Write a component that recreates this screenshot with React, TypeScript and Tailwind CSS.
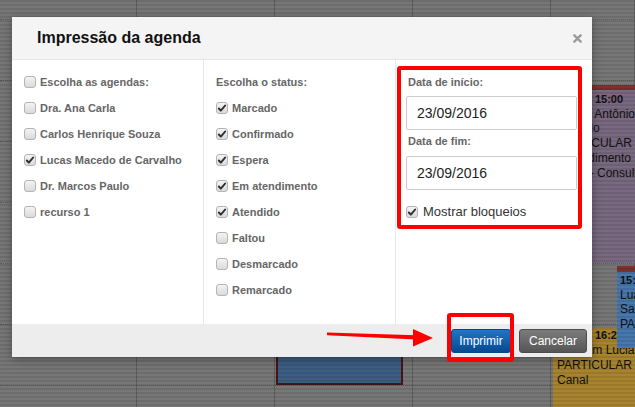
import React from 'react'

const agendas = [
  { label: 'Escolha as agendas:', checked: false },
  { label: 'Dra. Ana Carla', checked: false },
  { label: 'Carlos Henrique Souza', checked: false },
  { label: 'Lucas Macedo de Carvalho', checked: true },
  { label: 'Dr. Marcos Paulo', checked: false },
  { label: 'recurso 1', checked: false },
]

const statuses = [
  { label: 'Marcado', checked: true },
  { label: 'Confirmado', checked: true },
  { label: 'Espera', checked: true },
  { label: 'Em atendimento', checked: true },
  { label: 'Atendido', checked: true },
  { label: 'Faltou', checked: false },
  { label: 'Desmarcado', checked: false },
  { label: 'Remarcado', checked: false },
]

const gridCols = ['w-[137px]', 'w-[138px]', 'w-[138px]', 'w-[138px]', 'w-[84px]']

function Check({ checked = false }: { checked?: boolean }) {
  return (
    <span className="flex h-[12px] w-[12px] shrink-0 items-center justify-center rounded-[3px] border border-[#b3b3b3] bg-linear-to-b from-[#f4f4f4] to-[#dadada]">
      {checked && (
        <svg viewBox="0 0 12 12" className="h-[10px] w-[10px]">
          <path d="M2.2 6.6 L4.6 9.2 L9.8 3" fill="none" stroke="#2e2e2e" strokeWidth="2.3" strokeLinecap="round" strokeLinejoin="round" />
        </svg>
      )}
    </span>
  )
}

function CheckRow({ label, checked }: { label: string, checked: boolean }) {
  return (
    <div className="flex h-[26px] items-center gap-[4px]">
      <Check checked={ checked } />
      <span className="text-[11px] font-bold text-[#666]">{label}</span>
    </div>
  )
}

export default function App() {
  return (
    <div className="relative h-[407px] w-[635px] overflow-hidden bg-[#777777] font-['Liberation_Sans',Arial,sans-serif]">
      {/* grade da agenda ao fundo */}
      <div className="flex h-full">
        {gridCols.map((w, i) => (
          <div key={ i } className={ `${w} h-full border-r border-[#5e5e5e]` }>
            <div className="h-[20px] border-b border-dotted border-[#5a5a5a]" />
            {[0, 1, 2, 3, 4, 5].map(r => (
              <div key={ r } className="h-[61px] border-b border-dotted border-[#5a5a5a]" />
            ))}
          </div>
        ))}
      </div>

      {/* eventos */}
      <div className="absolute left-[276px] top-[300px] h-[85px] w-[127px] border-2 border-[#4d1212] bg-[#3d5e84]" />

      <div className="absolute left-[553px] top-[85px] h-[178px] w-[82px] overflow-hidden bg-[#786880] text-[12px] leading-[14.7px] whitespace-nowrap text-[#111]">
        <div className="h-[5px] bg-[#7e3030]" />
        <div className="px-[4px] pt-[2px]">
          <div className="text-[11px] font-bold">14:20 - 15:00</div>
          <div>Carlos Antônio</div>
          <div>Macedo</div>
          <div>PARTICULAR</div>
          <div>Procedimento</div>
          <div>Geral - Consulta</div>
        </div>
      </div>

      <div className="absolute left-[553px] top-[328px] h-[79px] w-[82px] overflow-hidden bg-[#a8842e] px-[4px] text-[12px] leading-[15px] whitespace-nowrap text-[#111]">
        <div className="text-[11px] font-bold">15:40 - 16:20</div>
        <div>Joaquim Luciano</div>
        <div>PARTICULAR</div>
        <div>Canal</div>
      </div>

      <div className="absolute left-[617px] top-[266px] h-[82px] w-[18px] overflow-hidden bg-[#4677ad] text-[12px] leading-[14.5px] whitespace-nowrap text-[#111]">
        <div className="h-[6px] bg-[#7e3030]" />
        <div className="px-[3px] pt-[1px]">
          <div className="text-[11px] font-bold">15:40</div>
          <div>Luana</div>
          <div>Santos</div>
          <div>PARTICULAR</div>
        </div>
      </div>

      {/* listras do fundo escurecido */}
      <div className="absolute inset-0 bg-[repeating-linear-gradient(to_bottom,rgba(0,0,0,0.09)_0px,rgba(0,0,0,0.09)_2px,transparent_2px,transparent_4px)]" />

      {/* modal */}
      <div className="absolute left-[12px] top-[17px] w-[580px] shadow-[0_2px_8px_rgba(0,0,0,0.35)]">
        <div className="flex h-[43px] items-center justify-between border-b border-[#e6e6e6] bg-[#f4f4f4] pl-[25px] pr-[10px]">
          <h1 className="text-[16px] font-bold text-[#111]">Impressão da agenda</h1>
          <svg viewBox="0 0 10 10" className="h-[9px] w-[9px]">
            <path d="M1.5 1.5 L8.5 8.5 M8.5 1.5 L1.5 8.5" stroke="#9a9a9a" strokeWidth="2.6" strokeLinecap="round" />
          </svg>
        </div>

        <div className="flex h-[264px] bg-white">
          <div className="w-[192px] border-r border-[#e8e8e8] pl-[12px] pt-[9px]">
            {agendas.map(a => <CheckRow key={ a.label } label={ a.label } checked={ a.checked } />)}
          </div>

          <div className="w-[192px] border-r border-[#e8e8e8] pl-[12px] pt-[9px]">
            <div className="flex h-[26px] items-center text-[11px] font-bold text-[#666]">Escolha o status:</div>
            {statuses.map(s => <CheckRow key={ s.label } label={ s.label } checked={ s.checked } />)}
          </div>

          <div className="flex-1 pl-[10px] pr-[15px] pt-[15px]">
            <div className="h-[14px] pl-[2px] text-[11px] leading-[14px] font-bold text-[#666]">Data de início:</div>
            <div className="mt-[7px] flex h-[34px] items-center rounded-[2px] border border-[#cccccc] pl-[10px] text-[14px] text-[#222]">23/09/2016</div>
            <div className="mt-[4px] h-[14px] pl-[2px] text-[11px] leading-[14px] font-bold text-[#666]">Data de fim:</div>
            <div className="mt-[8px] flex h-[34px] items-center rounded-[2px] border border-[#cccccc] pl-[10px] text-[14px] text-[#222]">23/09/2016</div>
            <div className="mt-[14px] flex h-[16px] items-center gap-[5px]">
              <Check checked />
              <span className="text-[13px] text-[#333]">Mostrar bloqueios</span>
            </div>
          </div>
        </div>

        <div className="flex h-[33px] items-center justify-end gap-[8px] bg-[#ededed] pr-[5px]">
          <button className="flex h-[24px] w-[60px] items-center justify-center rounded-[3px] border border-[#0a4585] bg-linear-to-b from-[#2274c4] to-[#064a92] text-[12px] text-white">Imprimir</button>
          <button className="flex h-[24px] w-[68px] items-center justify-center rounded-[3px] border border-[#4c4c4c] bg-linear-to-b from-[#7c7c7c] to-[#565656] text-[12px] text-white">Cancelar</button>
        </div>
      </div>

      {/* marcações em vermelho */}
      <div className="absolute left-[397px] top-[66px] h-[163px] w-[185px] rounded-[3px] border-4 border-[#ff0000]" />
      <div className="absolute left-[447px] top-[313px] h-[49px] w-[67px] rounded-[3px] border-4 border-[#ff0000]" />
      <svg viewBox="0 0 120 35" className="absolute left-[320px] top-[320px] h-[35px] w-[120px]">
        <polygon points="7,12.6 96,15.3 96,19.6 7,15.2" fill="#ff0000" />
        <polygon points="93,9 113,18 93,26.5" fill="#ff0000" />
      </svg>
    </div>
  )
}
